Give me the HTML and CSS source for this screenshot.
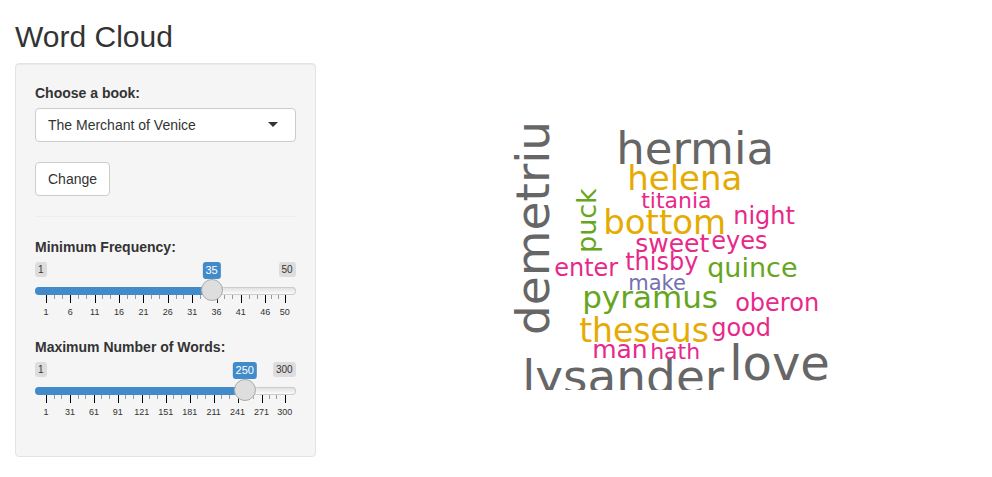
FILE: index.html
```html
<!DOCTYPE html>
<html lang="en">
<head>
<meta charset="utf-8">
<meta name="viewport" content="width=device-width, initial-scale=1">
<title>Word Cloud</title>
<link rel="stylesheet" href="styles.css">
</head>
<body>
<h2 class="title">Word Cloud</h2>
<div class="layout">
  <form class="well">
    <div class="field">
      <label for="book">Choose a book:</label>
      <div class="select">
        <select id="book">
          <option>The Merchant of Venice</option>
        </select>
      </div>
    </div>
    <button class="button" type="button">Change</button>
    <hr class="rule">
    <div class="field">
      <label for="freq">Minimum Frequency:</label>
      <div class="slider" style="--at: calc(34 / 49)">
        <div class="values"><span class="limit">1</span><span class="limit">50</span><output class="current" for="freq">35</output></div>
        <div class="rail"><div class="fill"></div><input id="freq" type="range" min="1" max="50" value="35"></div>
        <div class="ticks">
          <div class="tick" style="flex-grow: 5"><span>1</span></div>
          <div class="tick" style="flex-grow: 5"><span>6</span></div>
          <div class="tick" style="flex-grow: 5"><span>11</span></div>
          <div class="tick" style="flex-grow: 5"><span>16</span></div>
          <div class="tick" style="flex-grow: 5"><span>21</span></div>
          <div class="tick" style="flex-grow: 5"><span>26</span></div>
          <div class="tick" style="flex-grow: 5"><span>31</span></div>
          <div class="tick" style="flex-grow: 5"><span>36</span></div>
          <div class="tick" style="flex-grow: 5"><span>41</span></div>
          <div class="tick" style="flex-grow: 4"><span>46</span></div>
          <div class="tick last"><span>50</span></div>
        </div>
      </div>
    </div>
    <div class="field">
      <label for="max">Maximum Number of Words:</label>
      <div class="slider" style="--at: calc(249 / 299)">
        <div class="values"><span class="limit">1</span><span class="limit">300</span><output class="current" for="max">250</output></div>
        <div class="rail"><div class="fill"></div><input id="max" type="range" min="1" max="300" value="250"></div>
        <div class="ticks">
          <div class="tick" style="flex-grow: 30"><span>1</span></div>
          <div class="tick" style="flex-grow: 30"><span>31</span></div>
          <div class="tick" style="flex-grow: 30"><span>61</span></div>
          <div class="tick" style="flex-grow: 30"><span>91</span></div>
          <div class="tick" style="flex-grow: 30"><span>121</span></div>
          <div class="tick" style="flex-grow: 30"><span>151</span></div>
          <div class="tick" style="flex-grow: 30"><span>181</span></div>
          <div class="tick" style="flex-grow: 30"><span>211</span></div>
          <div class="tick" style="flex-grow: 30"><span>241</span></div>
          <div class="tick" style="flex-grow: 29"><span>271</span></div>
          <div class="tick last"><span>300</span></div>
        </div>
      </div>
    </div>
  </form>
  <main class="plot">
    <svg class="cloud" viewBox="346 63 631 400" role="img" aria-label="Word cloud">
      <clipPath id="area"><rect x="400" y="120" width="520" height="270"/></clipPath>
      <g clip-path="url(#area)">
        <g class="gray">
          <text font-size="47" transform="translate(549 335) rotate(-90)">demetriu</text>
          <text font-size="45" x="616" y="164">hermia</text>
          <text font-size="48" x="729" y="380">love</text>
          <text font-size="47" x="522" y="393">lysander</text>
        </g>
        <g class="gold">
          <text font-size="34" x="627" y="190">helena</text>
          <text font-size="34" x="603" y="234">bottom</text>
          <text font-size="33" x="579" y="342">theseus</text>
        </g>
        <g class="green">
          <text font-size="27" transform="translate(596 253) rotate(-90)">puck</text>
          <text font-size="27" x="707" y="277">quince</text>
          <text font-size="31" x="582" y="308">pyramus</text>
        </g>
        <g class="purple">
          <text font-size="21" x="628" y="290">make</text>
        </g>
        <g class="pink">
          <text font-size="22" x="641" y="208">titania</text>
          <text font-size="24" x="733" y="224">night</text>
          <text font-size="25" x="635" y="252">sweet</text>
          <text font-size="24" x="711" y="249">eyes</text>
          <text font-size="24" x="625" y="270">thisby</text>
          <text font-size="24" x="554" y="276">enter</text>
          <text font-size="24" x="735" y="311">oberon</text>
          <text font-size="24" x="711" y="336">good</text>
          <text font-size="25" x="592" y="358">man</text>
          <text font-size="22" x="650" y="359">hath</text>
        </g>
      </g>
    </svg>
  </main>
</div>
</body>
</html>
```
FILE: styles.css
```css
* { box-sizing: border-box; }

body {
  margin: 0;
  padding: 0 15px;
  background: #fff;
  color: #333;
  font: 14px/20px "Liberation Sans", Arial, sans-serif;
}

.title {
  margin: 20px 0 10px;
  font-size: 30px;
  font-weight: 500;
  line-height: 33px;
}

.layout {
  display: grid;
  grid-template-columns: calc((100% + 30px) / 3 - 30px) minmax(0, 1fr);
  column-gap: 30px;
  align-items: start;
}

.well {
  padding: 19px;
  border: 1px solid #e3e3e3;
  border-radius: 4px;
  background: #f5f5f5;
  box-shadow: inset 0 1px 1px rgba(0, 0, 0, 0.05);
}

.field { margin-bottom: 15px; }

.field label {
  display: block;
  margin-bottom: 5px;
  font-weight: bold;
}

.select {
  position: relative;
  margin-bottom: 20px;
}

.select select {
  display: block;
  width: 100%;
  height: 34px;
  padding: 6px 32px 6px 12px;
  border: 1px solid #ccc;
  border-radius: 4px;
  background: #fff;
  color: #333;
  font: inherit;
  appearance: none;
}

.select::after {
  content: "";
  position: absolute;
  top: 14px;
  right: 18px;
  border: 5px solid transparent;
  border-top-color: #333;
  border-bottom: 0;
  pointer-events: none;
}

.button {
  display: block;
  height: 34px;
  padding: 6px 12px;
  border: 1px solid #ccc;
  border-radius: 4px;
  background: #fff;
  color: #333;
  font: inherit;
}

.rule {
  margin: 20px 0;
  border: 0;
  border-top: 1px solid #eee;
}

.slider { height: 60px; }

.values {
  position: relative;
  display: flex;
  justify-content: space-between;
  align-items: flex-start;
  height: 17px;
}

.limit {
  padding: 0 3px;
  border-radius: 3px;
  background: #ddd;
  font-size: 10px;
  line-height: 15px;
}

.current {
  position: absolute;
  top: 0;
  left: calc(11px + (100% - 22px) * var(--at));
  transform: translateX(-50%);
  padding: 0 3px;
  border-radius: 3px;
  background: #428bca;
  color: #fff;
  font-size: 11px;
  line-height: 17px;
}

.rail {
  position: relative;
  height: 8px;
  margin-top: 8px;
  border-radius: 8px;
  background: linear-gradient(#ddd, #fff);
  box-shadow: inset 0 0 0 1px #ccc;
}

.fill {
  width: calc(11px + (100% - 22px) * var(--at));
  height: 8px;
  border-radius: 8px 0 0 8px;
  background: #428bca;
}

.rail input {
  position: absolute;
  top: -8px;
  left: 0;
  width: 100%;
  height: 22px;
  margin: 0;
  background: none;
  appearance: none;
}

.rail input::-webkit-slider-thumb {
  width: 22px;
  height: 22px;
  border: 1px solid #aaa;
  border-radius: 50%;
  background: #dedede;
  box-shadow: 1px 1px 3px rgba(255, 255, 255, 0.3);
  appearance: none;
}

.ticks {
  display: flex;
  margin: 0 11px;
}

.tick {
  flex: 1 1 0;
  width: 0;
  background:
    linear-gradient(#000, #000) 0 0 / 1px 8px no-repeat,
    linear-gradient(#999, #999) 33% 0 / 1px 4px no-repeat,
    linear-gradient(#999, #999) 67% 0 / 1px 4px no-repeat;
}

.tick.last {
  flex: 0 0 1px;
  margin-right: -1px;
  background: linear-gradient(#000, #000) 0 0 / 1px 8px no-repeat;
}

.tick span {
  display: block;
  width: 30px;
  margin: 12px 0 0 -15px;
  font-size: 9px;
  line-height: 10px;
  text-align: center;
}

.cloud {
  display: block;
  width: 100%;
  height: 400px;
  font-family: "DejaVu Sans", sans-serif;
}

.gray { fill: #666; }
.gold { fill: #e6ab02; }
.green { fill: #66a61e; }
.purple { fill: #7570b3; }
.pink { fill: #e7298a; }
```
